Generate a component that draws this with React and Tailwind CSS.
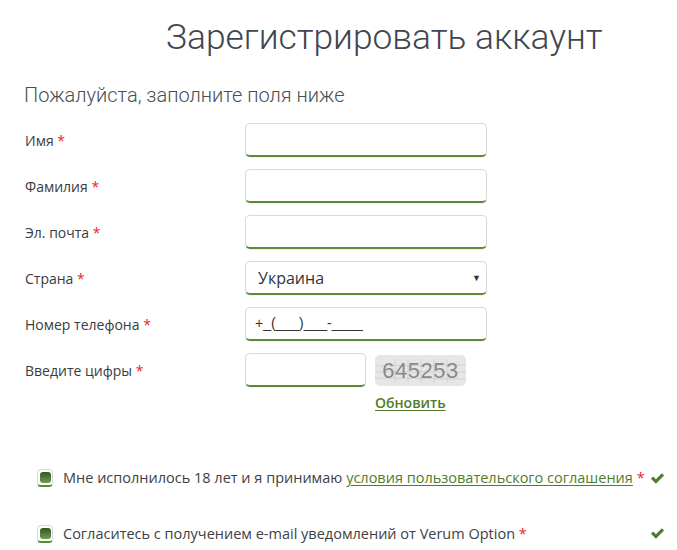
import React from "react";

const fields = [
    { label: "Имя", value: "" },
    { label: "Фамилия", value: "" },
    { label: "Эл. почта", value: "" },
];

function Star() {
    return <span className="text-[#e8262b]">*</span>;
}

function Check() {
    return (
        <svg viewBox="0 0 16 16" className="w-[15px] h-[15px] shrink-0 ml-[5px]" fill="#4f7d2b">
            <path d="M1 8.2 L3.4 5.8 L6.3 8.7 L12.6 2.4 L15 4.8 L6.3 13.5 Z" />
        </svg>
    );
}

function Box() {
    return (
        <span className="w-[16px] h-[18px] mr-[10px] rounded-[4px] border border-[#d8d8d8] border-b-2 border-b-[#5b8a3a] bg-white flex items-center justify-center shrink-0">
            <span className="w-[11px] h-[11px] rounded-[3px] bg-gradient-to-b from-[#2f5a1c] to-[#6f9a52]" />
        </span>
    );
}

const inputCls =
    "h-[34px] rounded-[5px] border border-[#d9d9d9] border-b-2 border-b-[#5b8a3a] bg-white shadow-[0_1px_1px_rgba(0,0,0,0.06)]";

const labelCls = "w-[220px] text-[14px] font-medium text-[#383c41]";

export default function App() {
    return (
        <div className="w-[677px] h-[550px] bg-white overflow-hidden font-['Open_Sans',sans-serif] text-[#3d4146]">
            <h1 className="font-['Roboto',sans-serif] font-light text-[35.3px] leading-none text-[#3f4650] pl-[166px] pt-[20px]">
                Зарегистрировать аккаунт
            </h1>
            <p className="font-['Roboto',sans-serif] font-light text-[20px] text-[#4a4e52] pl-[24px] mt-[30px] leading-none">
                Пожалуйста, заполните поля ниже
            </p>

            <div className="flex flex-col gap-[12px] mt-[18px] pl-[25px]">
                {fields.map((f) => (
                    <div key={f.label} className="flex items-center">
                        <label className={labelCls}>
                            {f.label} <Star />
                        </label>
                        <div className={`${inputCls} w-[242px]`} />
                    </div>
                ))}

                <div className="flex items-center">
                    <label className={labelCls}>
                        Страна <Star />
                    </label>
                    <div className={`${inputCls} w-[242px] flex items-center justify-between pl-[12px] pr-[5px]`}>
                        <span className="text-[16px] text-[#333]">Украина</span>
                        <span className="text-[9px] text-[#333]">▼</span>
                    </div>
                </div>

                <div className="flex items-center">
                    <label className={labelCls}>
                        Номер телефона <Star />
                    </label>
                    <div className={`${inputCls} w-[242px] flex items-center pl-[9px]`}>
                        <span className="text-[14px] text-[#333] font-['Liberation_Sans',sans-serif]">+_(___)___-____</span>
                    </div>
                </div>

                <div className="flex items-start">
                    <div className="w-[220px] h-[34px] flex items-center">
                        <label className="text-[14px] font-medium text-[#383c41]">
                            Введите цифры <Star />
                        </label>
                    </div>
                    <div className={`${inputCls} w-[121px]`} />
                    <div className="ml-[9px] flex flex-col">
                        <div className="w-[91px] h-[31px] mt-[2px] rounded-[5px] bg-[#e6e6e6] flex items-center justify-center relative overflow-hidden">
                            <svg className="absolute inset-0" width="91" height="31">
                                <g stroke="#c8c8c8" strokeWidth="0.7">
                                    <line x1="0" y1="11" x2="91" y2="10" />
                                    <line x1="0" y1="17" x2="91" y2="17" />
                                    <line x1="0" y1="23" x2="91" y2="24" />
                                    <line x1="20" y1="4" x2="20" y2="28" />
                                    <line x1="33" y1="4" x2="33" y2="28" />
                                    <line x1="46" y1="4" x2="46" y2="28" />
                                    <line x1="59" y1="4" x2="59" y2="28" />
                                    <line x1="72" y1="4" x2="72" y2="28" />
                                </g>
                            </svg>
                            <span className="relative font-['Liberation_Sans',sans-serif] text-[22px] text-[#8a8a8a] tracking-[0.5px]">
                                645253
                            </span>
                        </div>
                        <a href="#" className="mt-[6px] text-[14px] font-semibold text-[#4f7d2b] underline underline-offset-2">
                            Обновить
                        </a>
                    </div>
                </div>
            </div>

            <div className="flex flex-col gap-[34px] mt-[54px] pl-[37px] pr-[12px]">
                <div className="flex items-center text-[14.5px]">
                    <Box />
                    <span className="flex-1 whitespace-nowrap">
                        Мне исполнилось 18 лет и я принимаю{" "}
                        <a href="#" className="text-[#4f7d2b] underline underline-offset-2">
                            условия пользовательского соглашения
                        </a>{" "}
                        <Star />
                    </span>
                    <Check />
                </div>
                <div className="flex items-center text-[14.5px]">
                    <Box />
                    <span className="flex-1 whitespace-nowrap">
                        Согласитесь с получением e-mail уведомлений от Verum Option <Star />
                    </span>
                    <Check />
                </div>
            </div>
        </div>
    );
}
